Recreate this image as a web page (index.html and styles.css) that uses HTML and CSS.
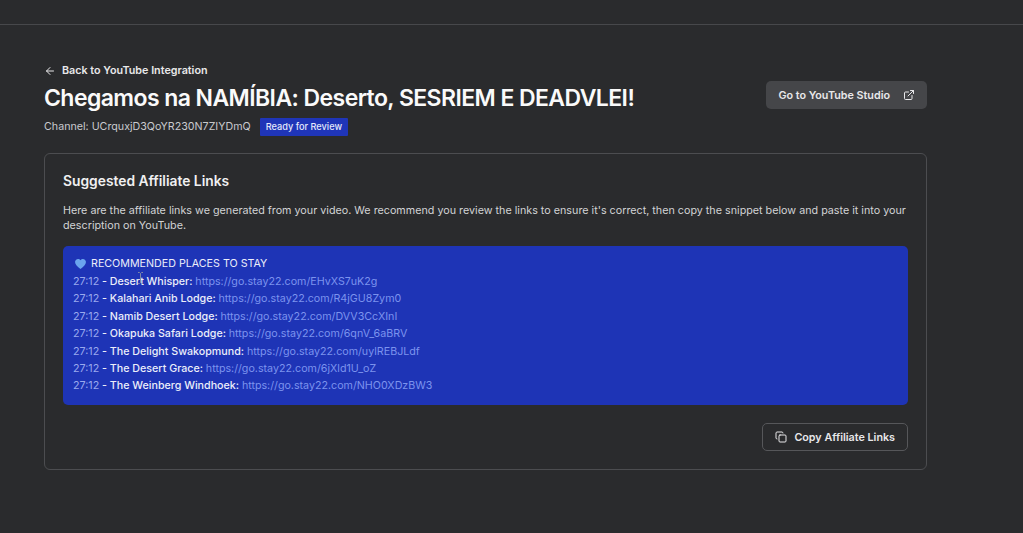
FILE: index.html
```html
<!DOCTYPE html>
<html lang="en">
<head>
<meta charset="utf-8">
<title>Suggested Affiliate Links</title>
<link rel="stylesheet" href="styles.css">
</head>
<body>
<header class="topbar"></header>
<main class="page">
  <a class="back" href="#">
    <svg class="icon-back" viewBox="0 0 24 24" fill="none" stroke="currentColor" stroke-width="2" stroke-linecap="round" stroke-linejoin="round"><path d="M19 12H5"/><path d="m12 19-7-7 7-7"/></svg>
    <span>Back to YouTube Integration</span>
  </a>
  <div class="head">
    <div class="head-text">
      <h1>Chegamos na NAMÍBIA: Deserto, SESRIEM E DEADVLEI!</h1>
      <div class="meta">
        <span class="channel">Channel: UCrquxjD3QoYR230N7ZIYDmQ</span>
        <span class="badge">Ready for Review</span>
      </div>
    </div>
    <a class="studio" href="#">
      <span>Go to YouTube Studio</span>
      <svg class="icon-ext" viewBox="0 0 24 24" fill="none" stroke="currentColor" stroke-width="2" stroke-linecap="round" stroke-linejoin="round"><path d="M15 3h6v6"/><path d="M10 14 21 3"/><path d="M18 13v6a2 2 0 0 1-2 2H5a2 2 0 0 1-2-2V8a2 2 0 0 1 2-2h6"/></svg>
    </a>
  </div>
  <section class="card">
    <h2>Suggested Affiliate Links</h2>
    <p class="intro">Here are the affiliate links we generated from your video. We recommend you review the links to ensure it's correct, then copy the snippet below and paste it into your description on YouTube.</p>
    <div class="snippet">
      <div class="snippet-title">
        <svg class="heart" viewBox="0 0 24 22"><path fill="#6aa5ee" d="M12 22C5 16.500 0 12.600 0 6.800 0 3 3 0 6.600 0c2.200 0 4.200 1.100 5.400 3 1.200-1.900 3.200-3 5.400-3C21 0 24 3 24 6.800 24 12.600 19 16.500 12 22z"/></svg>
        <span>RECOMMENDED PLACES TO STAY</span>
      </div>
      <div class="row"><span class="time">27:12</span> - Desert Whisper: <a href="#">https://go.stay22.com/EHvXS7uK2g</a></div>
      <div class="row"><span class="time">27:12</span> - Kalahari Anib Lodge: <a href="#">https://go.stay22.com/R4jGU8Zym0</a></div>
      <div class="row"><span class="time">27:12</span> - Namib Desert Lodge: <a href="#">https://go.stay22.com/DVV3CcXInI</a></div>
      <div class="row"><span class="time">27:12</span> - Okapuka Safari Lodge: <a href="#">https://go.stay22.com/6qnV_6aBRV</a></div>
      <div class="row"><span class="time">27:12</span> - The Delight Swakopmund: <a href="#">https://go.stay22.com/uylREBJLdf</a></div>
      <div class="row"><span class="time">27:12</span> - The Desert Grace: <a href="#">https://go.stay22.com/6jXld1U_oZ</a></div>
      <div class="row"><span class="time">27:12</span> - The Weinberg Windhoek: <a href="#">https://go.stay22.com/NHO0XDzBW3</a></div>
      <svg class="ibeam" viewBox="0 0 7 12" fill="none" stroke="#7f88a8" stroke-width="1"><path d="M1 .5h1.500L3.500 1.500 4.500.5H6M3.500 1.500v9M1 11.500h1.500l1-1 1 1H6"/></svg>
    </div>
    <div class="actions">
      <button class="copy" type="button">
        <svg class="icon-copy" viewBox="0 0 24 24" fill="none" stroke="currentColor" stroke-width="2" stroke-linecap="round" stroke-linejoin="round"><rect x="8" y="8" width="14" height="14" rx="2"/><path d="M4 16c-1.100 0-2-.9-2-2V4c0-1.100.9-2 2-2h10c1.100 0 2 .9 2 2"/></svg>
        <span>Copy Affiliate Links</span>
      </button>
    </div>
  </section>
</main>
</body>
</html>
```
FILE: styles.css
```css
* { box-sizing: border-box; }
html, body { margin: 0; height: 100%; }
body {
  background: #2a2b2d;
  color: #f4f4f5;
  font-family: Inter, "Liberation Sans", sans-serif;
  overflow: hidden;
}
a { color: inherit; text-decoration: none; }
.topbar { height: 25px; border-bottom: 1px solid #47484b; }
.page { width: 883px; margin-left: 44px; padding-top: 39px; }
.back {
  display: flex; align-items: center; gap: 6px;
  font-size: 10.750px; font-weight: 600; line-height: 14px; color: #e8e8ea;
}
.icon-back { width: 12px; height: 12px; }
.head { display: flex; justify-content: space-between; align-items: flex-start; margin-top: 5px; }
h1 { margin: 0; font-size: 23px; line-height: 30px; font-weight: 600; letter-spacing: -0.576px; color: #fafafa; }
.meta { display: flex; align-items: center; gap: 9px; margin-top: 5px; }
.channel { font-size: 10.700px; line-height: 18px; color: #c9cacd; }
.badge {
  background: #1f35b8; color: #e4e8fb; font-size: 9.200px; font-weight: 500;
  line-height: 14px; padding: 2px 6px; border-radius: 1px;
}
.studio {
  display: flex; align-items: center; gap: 13px; height: 28px; padding: 0 12px;
  background: #454649; border-radius: 5px; margin-top: -2px;
  font-size: 10.750px; font-weight: 600; color: #e8e8ea;
}
.icon-ext { width: 12px; height: 12px; }
.card {
  margin-top: 17px; height: 317px; padding: 19px 18px;
  border: 1px solid #4c4d50; border-radius: 6px;
}
h2 { margin: 0; font-size: 13.820px; line-height: 17px; font-weight: 600; color: #f0f0f1; }
.intro { margin: 13px 0 0; font-size: 10.750px; line-height: 15.200px; color: #d2d3d5; }
.snippet {
  position: relative; margin-top: 13px; height: 159px; padding: 9px 10px 0;
  background: #1e34b6; border-radius: 5px; font-size: 10.700px; line-height: 17.420px;
  color: #eceefa;
}
.snippet-title { display: flex; align-items: center; gap: 5px; padding-left: 2px; }
.heart { width: 11px; height: 10px; }
.row { font-weight: 450; }
.time { color: #9aa9ee; font-weight: 400; }
.row a { color: #7c93ee; font-weight: 400; }
.ibeam { position: absolute; left: 74px; top: 26px; width: 7px; height: 12px; }
.actions { display: flex; justify-content: flex-end; margin-top: 18px; }
.copy {
  display: flex; align-items: center; gap: 7px; height: 28px; padding: 0 12px;
  background: transparent; border: 1px solid #56575a; border-radius: 5px;
  color: #e8e8ea; font: 600 10.750px Inter, "Liberation Sans", sans-serif;
}
.icon-copy { width: 12px; height: 12px; }
```
